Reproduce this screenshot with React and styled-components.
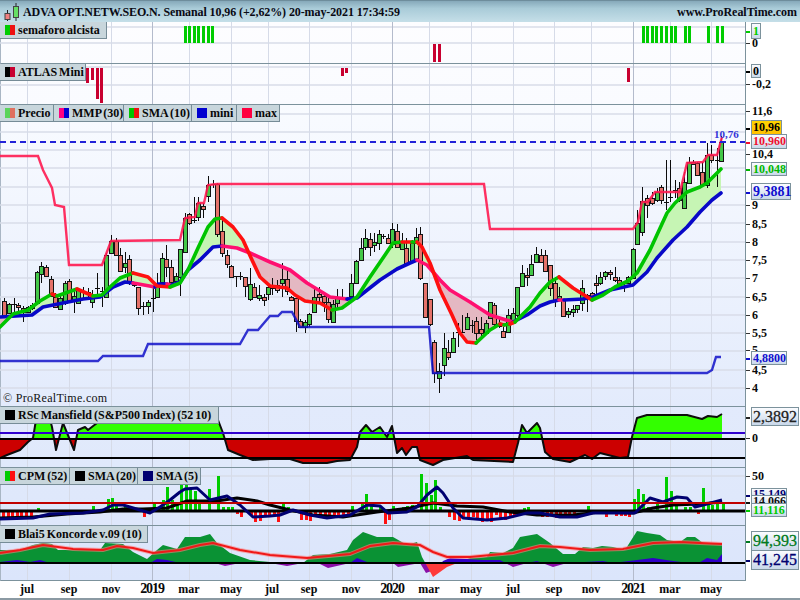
import React from 'react';
import styled, { createGlobalStyle } from 'styled-components';

const GlobalStyle = createGlobalStyle`
  html, body {
    margin: 0;
    padding: 0;
    background: #fff;
  }
  * {
    box-sizing: border-box;
  }
`;

const SERIF = '"Liberation Serif", "Times New Roman", serif';
const PLOT_W = 745;

/* vertical grid: months and years, the year lines are darker */
const monthX = [27, 69, 111, 189, 231, 268, 309, 351, 429, 471, 513, 554, 591, 670, 711];
const yearX = [152, 392, 633];

const timeLabels = [
  ['jul', 27], ['sep', 69], ['nov', 111], ['2019', 152, true], ['mar', 189], ['may', 231],
  ['jul', 272], ['sep', 309], ['nov', 351], ['2020', 392, true], ['mar', 429], ['may', 471],
  ['jul', 513], ['sep', 554], ['nov', 591], ['2021', 633, true], ['mar', 670], ['may', 711],
];

/* x, body top, body bottom, high, low, kind (g up, r down, d doji) */
const candles = [
  [4, 301, 315, 298, 317, 'r'], [9, 304, 313, 303, 314, 'g'], [14, 304, 304, 298, 314, 'd'], [18, 305, 307, 303, 313, 'r'],
  [23, 308, 312, 306, 322, 'r'], [28, 307, 312, 306, 313, 'g'], [32, 305, 308, 303, 310, 'g'], [37, 272, 303, 271, 305, 'g'],
  [41, 266, 274, 262, 283, 'g'], [46, 267, 276, 265, 277, 'r'], [51, 279, 296, 276, 297, 'r'], [55, 297, 307, 293, 308, 'r'],
  [60, 298, 309, 296, 310, 'g'], [65, 283, 303, 281, 305, 'g'], [69, 281, 302, 279, 302, 'r'], [74, 296, 300, 289, 313, 'g'],
  [78, 289, 303, 288, 304, 'g'], [83, 291, 291, 287, 298, 'd'], [88, 292, 292, 288, 297, 'd'], [92, 298, 302, 290, 308, 'g'],
  [97, 288, 288, 273, 298, 'd'], [102, 291, 291, 287, 307, 'd'], [106, 255, 297, 253, 298, 'g'], [111, 241, 253, 235, 254, 'g'],
  [116, 241, 255, 238, 256, 'r'], [120, 255, 271, 248, 272, 'r'], [125, 263, 267, 252, 273, 'g'], [129, 259, 282, 255, 285, 'r'],
  [134, 285, 285, 284, 287, 'd'], [138, 287, 308, 287, 315, 'r'], [143, 306, 306, 302, 315, 'd'], [148, 302, 306, 300, 314, 'g'],
  [153, 298, 298, 285, 312, 'd'], [157, 285, 297, 273, 298, 'g'], [162, 258, 282, 253, 282, 'g'], [166, 259, 267, 245, 277, 'r'],
  [171, 267, 282, 260, 285, 'r'], [176, 276, 281, 273, 282, 'g'], [180, 249, 277, 249, 296, 'g'], [185, 218, 252, 213, 253, 'g'],
  [189, 214, 223, 213, 225, 'r'], [194, 220, 220, 197, 223, 'd'], [198, 203, 217, 197, 221, 'g'], [203, 206, 209, 203, 218, 'r'],
  [208, 185, 196, 176, 202, 'g'], [213, 184, 184, 180, 188, 'd'], [217, 184, 234, 183, 237, 'r'], [222, 231, 253, 218, 257, 'r'],
  [227, 255, 264, 250, 268, 'r'], [231, 266, 277, 265, 278, 'r'], [236, 276, 276, 276, 287, 'd'], [240, 276, 276, 272, 280, 'd'],
  [245, 277, 286, 277, 297, 'r'], [250, 284, 299, 268, 301, 'g'], [254, 287, 297, 283, 298, 'r'], [259, 295, 298, 285, 301, 'g'],
  [264, 297, 300, 294, 306, 'r'], [268, 287, 294, 285, 300, 'g'], [272, 288, 288, 278, 295, 'd'], [277, 285, 290, 280, 293, 'r'],
  [282, 279, 283, 263, 297, 'g'], [287, 279, 291, 268, 295, 'r'], [291, 297, 300, 296, 301, 'r'], [296, 298, 321, 298, 332, 'r'],
  [300, 321, 327, 319, 328, 'r'], [305, 322, 327, 320, 333, 'g'], [309, 314, 324, 313, 327, 'g'], [314, 297, 312, 287, 313, 'g'],
  [319, 294, 297, 287, 303, 'r'], [324, 296, 302, 293, 312, 'r'], [328, 302, 319, 298, 323, 'r'], [333, 304, 322, 300, 323, 'g'],
  [337, 298, 303, 289, 308, 'g'], [342, 297, 297, 289, 300, 'd'], [347, 298, 298, 297, 301, 'd'], [351, 283, 296, 274, 297, 'g'],
  [356, 261, 283, 260, 283, 'g'], [361, 248, 260, 238, 261, 'g'], [365, 238, 247, 229, 250, 'g'], [370, 239, 247, 233, 256, 'r'],
  [374, 242, 245, 233, 252, 'g'], [379, 234, 243, 230, 250, 'g'], [383, 236, 236, 234, 239, 'd'], [388, 238, 243, 234, 243, 'r'],
  [392, 229, 244, 223, 248, 'g'], [397, 231, 247, 224, 248, 'r'], [402, 242, 249, 233, 250, 'g'], [406, 248, 263, 238, 263, 'r'],
  [412, 243, 262, 240, 263, 'g'], [416, 237, 243, 228, 244, 'g'], [420, 234, 278, 227, 280, 'r'], [425, 283, 317, 283, 317, 'r'],
  [430, 299, 324, 299, 326, 'r'], [434, 342, 373, 340, 383, 'r'], [439, 371, 378, 363, 393, 'g'], [444, 348, 365, 333, 376, 'g'],
  [448, 352, 357, 340, 360, 'r'], [453, 338, 352, 332, 353, 'g'], [458, 332, 332, 323, 347, 'd'], [462, 332, 332, 315, 333, 'd'],
  [467, 317, 329, 313, 330, 'g'], [472, 325, 325, 320, 333, 'd'], [476, 321, 333, 317, 340, 'r'], [481, 329, 333, 317, 337, 'r'],
  [486, 323, 333, 320, 333, 'g'], [490, 302, 318, 302, 319, 'g'], [494, 305, 324, 303, 328, 'r'], [499, 326, 326, 317, 328, 'd'],
  [503, 331, 337, 327, 338, 'r'], [508, 315, 332, 309, 333, 'g'], [513, 313, 320, 308, 324, 'g'], [517, 287, 315, 287, 317, 'g'],
  [522, 273, 286, 265, 287, 'g'], [527, 275, 277, 268, 286, 'r'], [531, 264, 275, 255, 276, 'g'], [536, 254, 262, 247, 263, 'g'],
  [541, 255, 262, 249, 263, 'r'], [545, 255, 271, 250, 272, 'r'], [550, 265, 288, 265, 296, 'r'], [555, 283, 300, 277, 307, 'r'],
  [559, 296, 300, 287, 300, 'g'], [563, 300, 316, 299, 317, 'r'], [568, 311, 314, 308, 318, 'g'], [573, 309, 312, 305, 317, 'g'],
  [577, 305, 309, 305, 313, 'g'], [582, 288, 303, 280, 311, 'g'], [587, 295, 297, 294, 312, 'r'], [592, 293, 296, 292, 300, 'r'],
  [596, 283, 285, 275, 294, 'r'], [600, 277, 283, 272, 285, 'g'], [605, 272, 276, 271, 280, 'g'], [610, 272, 274, 270, 280, 'r'],
  [615, 277, 280, 267, 282, 'r'], [619, 280, 285, 277, 287, 'r'], [624, 286, 286, 282, 292, 'd'], [628, 277, 283, 276, 284, 'g'],
  [633, 249, 278, 248, 279, 'g'], [637, 223, 244, 210, 245, 'g'], [642, 201, 232, 187, 236, 'g'], [647, 198, 205, 195, 218, 'r'],
  [652, 198, 203, 192, 205, 'r'], [657, 192, 200, 188, 202, 'g'], [661, 187, 200, 185, 204, 'r'], [666, 202, 202, 160, 210, 'd'],
  [670, 197, 197, 160, 202, 'd'], [675, 190, 190, 180, 198, 'd'], [679, 188, 200, 182, 202, 'r'], [684, 182, 208, 172, 209, 'g'],
  [689, 162, 183, 157, 184, 'g'], [693, 162, 164, 160, 165, 'r'], [697, 163, 175, 162, 176, 'r'], [702, 172, 185, 162, 187, 'r'],
  [707, 155, 185, 143, 188, 'g'], [711, 155, 160, 145, 163, 'r'], [717, 160, 160, 148, 187, 'd'], [721, 142, 161, 136, 162, 'g'],
];

const maxLine = [[0, 156], [38, 156], [43, 170], [52, 188], [55, 205], [64, 207], [69, 265], [102, 265], [111, 241], [180, 240], [185, 218], [195, 217], [198, 203], [204, 203], [208, 185], [217, 184], [484, 184], [490, 229], [633, 229], [638, 222], [642, 202], [648, 202], [655, 192], [680, 192], [687, 163], [703, 162], [708, 155], [717, 155], [722, 137]];
const miniLine = [[0, 361], [98, 361], [103, 356], [143, 356], [148, 344], [240, 344], [248, 330], [258, 330], [270, 316], [278, 316], [282, 312], [292, 312], [300, 327], [429, 327], [433, 373], [707, 373], [712, 370], [716, 357], [721, 357]];

/* MMP and SMA are cut in runs: first colour when rising, second when falling */
const mmpRuns = [
  ['b', [[0, 317], [32, 315], [43, 307], [63, 303], [83, 299], [100, 297], [113, 287], [125, 282], [133, 283]]],
  ['p', [[133, 283], [155, 287]]],
  ['b', [[155, 287], [158, 284], [167, 284]]],
  ['p', [[167, 284], [172, 285]]],
  ['b', [[172, 285], [180, 282], [188, 270], [200, 260], [213, 247], [222, 246]]],
  ['p', [[222, 246], [237, 248], [250, 253], [270, 262], [290, 270], [307, 283], [330, 297], [347, 299]]],
  ['b', [[347, 299], [357, 298], [380, 280], [397, 269], [410, 263], [417, 260]]],
  ['p', [[417, 260], [427, 265], [440, 280], [450, 290], [470, 302], [490, 315], [503, 319], [513, 322]]],
  ['b', [[513, 322], [527, 315], [540, 306], [550, 302], [559, 300]]],
  ['p', [[559, 300], [564, 300]]],
  ['b', [[564, 300], [583, 299], [593, 297], [610, 290], [633, 285], [647, 272], [657, 258], [673, 240], [687, 227], [700, 212], [712, 200], [721, 193]]],
];

const smaRuns = [
  ['g', [[0, 327], [13, 314], [28, 310], [40, 301], [52, 294]]],
  ['r', [[52, 294], [57, 296]]],
  ['g', [[57, 296], [77, 289]]],
  ['r', [[77, 289], [93, 296]]],
  ['g', [[93, 296], [102, 295], [110, 287], [120, 278], [133, 273]]],
  ['r', [[133, 273], [148, 277], [157, 286], [170, 287]]],
  ['g', [[170, 287], [180, 283], [188, 270], [198, 248], [208, 227], [215, 219], [222, 218]]],
  ['r', [[222, 218], [233, 227], [243, 240], [252, 260], [260, 277], [270, 286], [287, 288], [295, 295], [305, 301], [320, 303], [332, 310]]],
  ['g', [[332, 310], [342, 308], [357, 297], [370, 277], [385, 255], [393, 243], [402, 242]]],
  ['r', [[402, 242], [412, 242]]],
  ['g', [[412, 242], [417, 242]]],
  ['r', [[417, 242], [422, 247], [430, 263], [440, 290], [452, 315], [460, 333], [467, 342], [476, 343]]],
  ['g', [[476, 343], [490, 330], [500, 324]]],
  ['r', [[500, 324], [504, 325]]],
  ['g', [[504, 325], [510, 324]]],
  ['r', [[510, 324], [515, 322]]],
  ['g', [[515, 322], [530, 307], [540, 293], [550, 282], [559, 277]]],
  ['r', [[559, 277], [573, 288], [592, 300]]],
  ['g', [[592, 300], [603, 295], [615, 287], [628, 281], [637, 273], [650, 250], [667, 213], [675, 203], [687, 192], [700, 187], [707, 183], [721, 169]]],
];

const mansfield = [[0, 458], [7, 455], [20, 450], [28, 442], [33, 438], [36, 420], [40, 404], [46, 404], [52, 427], [56, 450], [63, 423], [74, 450], [78, 430], [85, 427], [88, 430], [97, 423], [104, 412], [216, 412], [218, 420], [223, 433], [228, 450], [240, 455], [253, 460], [270, 459], [290, 459], [303, 463], [327, 463], [337, 461], [350, 460], [357, 447], [360, 432], [366, 425], [372, 432], [380, 427], [387, 437], [392, 426], [397, 453], [402, 448], [406, 455], [412, 447], [417, 447], [420, 460], [433, 465], [443, 460], [467, 456], [473, 460], [513, 462], [518, 443], [522, 425], [527, 433], [537, 423], [540, 428], [545, 452], [553, 459], [570, 462], [585, 455], [592, 459], [600, 453], [620, 458], [628, 457], [632, 437], [637, 418], [647, 415], [687, 415], [702, 419], [708, 416], [717, 417], [722, 414]];

/* x, end of the bar; above the zero line is green, below is red */
const cpmBars = [
  [2, 517], [7, 517], [11, 517], [16, 517], [20, 517], [25, 517], [30, 517], [37, 508], [92, 506], [107, 499], [111, 498], [115, 503], [124, 507],
  [143, 517], [148, 514], [153, 503], [157, 507], [162, 500], [166, 487], [171, 500], [176, 503], [180, 485], [185, 485], [189, 490], [194, 491], [198, 503], [208, 489], [217, 476], [222, 507], [227, 507], [231, 507],
  [236, 514], [240, 517], [250, 516], [254, 522], [259, 521], [264, 516], [268, 516], [273, 516], [277, 522], [282, 504], [287, 507],
  [300, 520], [305, 520], [309, 521], [314, 515], [319, 515], [324, 515], [328, 515], [333, 515], [337, 515], [342, 515], [347, 515], [351, 506],
  [361, 504], [365, 494], [370, 504], [379, 507], [384, 524], [388, 520], [392, 506], [402, 507], [406, 506], [411, 505], [420, 474], [425, 483], [430, 495], [434, 480], [439, 507],
  [448, 517], [453, 520], [458, 521], [462, 518], [467, 517], [472, 517], [476, 518], [481, 522], [486, 520], [490, 522], [495, 515], [499, 518], [504, 520], [509, 517], [513, 517],
  [523, 508], [527, 507], [532, 515], [541, 517], [546, 517], [550, 516], [555, 518], [559, 518], [564, 518], [568, 517], [573, 516], [587, 506], [605, 517], [615, 516], [620, 516], [624, 516], [628, 517],
  [633, 499], [637, 489], [642, 494], [647, 507], [656, 503], [665, 477], [670, 491], [675, 504], [684, 507], [689, 507], [697, 514], [702, 488], [707, 504], [711, 505], [716, 502], [722, 503],
];
const cpmSma20 = [[0, 518], [33, 517], [67, 514], [100, 512], [123, 509], [143, 509], [167, 508], [187, 501], [217, 501], [237, 498], [257, 501], [270, 505], [290, 510], [313, 515], [343, 517], [377, 512], [410, 508], [433, 503], [457, 506], [483, 507], [510, 512], [537, 515], [573, 515], [600, 512], [633, 513], [653, 508], [673, 505], [700, 504], [722, 502]];
const cpmSma5 = [[0, 519], [33, 518], [50, 514], [83, 513], [103, 510], [113, 505], [123, 505], [140, 510], [150, 513], [160, 507], [170, 500], [180, 492], [185, 489], [197, 488], [210, 500], [227, 496], [240, 505], [253, 517], [270, 516], [280, 515], [293, 510], [310, 515], [327, 518], [350, 515], [367, 505], [380, 506], [388, 513], [407, 512], [417, 507], [427, 495], [437, 487], [443, 493], [453, 508], [463, 518], [487, 520], [507, 518], [527, 513], [540, 513], [560, 517], [577, 517], [593, 513], [620, 513], [635, 513], [650, 498], [663, 502], [677, 497], [687, 498], [695, 507], [707, 504], [722, 500]];

const koncordeGreen = [[0, 550], [20, 550], [33, 545], [43, 543], [52, 544], [58, 550], [100, 550], [105, 543], [123, 544], [133, 552], [147, 559], [157, 550], [163, 545], [177, 549], [185, 537], [200, 537], [210, 534], [217, 543], [230, 553], [250, 560], [270, 562], [303, 563], [313, 555], [330, 554], [347, 550], [353, 540], [363, 532], [377, 537], [393, 537], [407, 545], [417, 542], [422, 557], [433, 577], [447, 567], [470, 558], [487, 557], [490, 552], [503, 553], [513, 548], [520, 537], [537, 534], [550, 543], [563, 554], [575, 554], [583, 547], [593, 548], [602, 546], [613, 547], [625, 550], [637, 531], [647, 533], [660, 535], [667, 540], [680, 542], [687, 537], [695, 537], [703, 543], [722, 543]];
const koncordeBlue = [[0, 562], [17, 560], [30, 562], [40, 560], [50, 563], [150, 563], [157, 559], [167, 560], [180, 563], [215, 563], [225, 566], [240, 563], [270, 563], [287, 566], [303, 563], [320, 564], [328, 568], [350, 563], [357, 558], [367, 562], [393, 563], [398, 567], [420, 563], [426, 573], [437, 569], [443, 561], [450, 558], [483, 560], [500, 560], [513, 567], [527, 563], [537, 561], [553, 567], [567, 563], [603, 561], [613, 563], [653, 558], [673, 561], [697, 564], [707, 558], [717, 560], [722, 554]];
const koncordeRed = [[0, 553], [20, 550], [43, 545], [73, 549], [103, 550], [117, 546], [133, 548], [153, 553], [180, 550], [200, 545], [213, 543], [240, 550], [270, 555], [307, 558], [350, 554], [370, 546], [393, 543], [420, 545], [433, 552], [447, 557], [470, 557], [513, 553], [540, 546], [560, 547], [590, 550], [623, 549], [653, 543], [680, 542], [700, 543], [722, 544]];

const RUN_COLOR = { g: '#00c400', r: '#ff1010', b: '#0808c8', p: '#ff1070' };

const toPoints = (pts) => pts.map((p) => p.join(',')).join(' ');

const yAt = (pts, x) => {
  for (let i = 1; i < pts.length; i++) {
    if (x <= pts[i][0]) {
      const [x0, y0] = pts[i - 1];
      const [x1, y1] = pts[i];
      return x1 === x0 ? y1 : y0 + ((y1 - y0) * (x - x0)) / (x1 - x0);
    }
  }
  return pts[pts.length - 1][1];
};

/* the band between SMA and MMP: green while the SMA is above, pink while it is under */
function bandShapes() {
  const sma = smaRuns.flatMap((r) => r[1]);
  const mmp = mmpRuns.flatMap((r) => r[1]);
  const shapes = [];
  let run = null;
  for (let x = 0; x <= 721; x++) {
    const a = yAt(sma, x);
    const b = yAt(mmp, x);
    const up = a < b;
    if (!run || run.up !== up) {
      if (run) shapes.push(run);
      run = { up, top: [], bottom: [] };
    }
    run.top.push([x, a]);
    run.bottom.unshift([x, b]);
  }
  shapes.push(run);
  return shapes;
}

function Grid({ top, height, lines = [] }) {
  return (
    <g>
      {lines.map((y) => <line key={y} x1="0" x2={PLOT_W} y1={y} y2={y} stroke="#d9dde9" strokeWidth="1.5" />)}
      {monthX.map((x) => <line key={x} x1={x + 0.5} x2={x + 0.5} y1={top} y2={top + height} stroke="#d6dbe8" strokeWidth="1" />)}
      {yearX.map((x) => <line key={x} x1={x + 0.5} x2={x + 0.5} y1={top} y2={top + height} stroke="#b4bbcc" strokeWidth="1" />)}
    </g>
  );
}

function Chart({ top, height, lines, children }) {
  return (
    <ChartSvg width={PLOT_W} height={height} viewBox={`0 ${top} ${PLOT_W} ${height}`}>
      <Grid top={top} height={height} lines={lines} />
      {children}
    </ChartSvg>
  );
}

function Candle({ c }) {
  const [x, t, b, hi, lo, kind] = c;
  const fill = kind === 'g' ? '#44c848' : '#e5726a';
  return (
    <g shapeRendering="crispEdges">
      <line x1={x + 0.5} x2={x + 0.5} y1={hi} y2={lo} stroke="#0c0c0c" />
      {kind === 'd'
        ? <line x1={x - 2} x2={x + 3} y1={t + 0.5} y2={t + 0.5} stroke="#0c0c0c" />
        : <rect x={x - 1.5} y={t + 0.5} width="4" height={b - t} fill={fill} stroke="#141414" />}
    </g>
  );
}

function ColorRuns({ runs }) {
  return runs.map(([c, pts], i) => (
    <polyline key={i} points={toPoints(pts)} fill="none" stroke={RUN_COLOR[c]} strokeWidth="3.6" strokeLinejoin="round" strokeLinecap="round" />
  ));
}

function Semaforo() {
  const green = [184, 188, 193, 197, 202, 207, 211, 642, 646, 651, 655, 660, 665, 670, 674, 684, 688, 707, 716, 721];
  return (
    <Chart top={22} height={41} lines={[27, 43]}>
      <g shapeRendering="crispEdges">
        {green.map((x) => <rect key={x} x={x} y="26" width="3" height="17" fill="#00cc00" />)}
        {[433, 438].map((x) => <rect key={x} x={x} y="44" width="3" height="18" fill="#c80030" />)}
      </g>
    </Chart>
  );
}

function Atlas() {
  const bars = [[86, 83], [91, 80], [96, 99], [100, 103], [341, 76], [345, 73], [627, 82]];
  return (
    <Chart top={64} height={40} lines={[67, 85]}>
      <g shapeRendering="crispEdges">
        {bars.map(([x, y]) => <rect key={x} x={x} y="68" width="3" height={y - 68} fill="#c80030" />)}
      </g>
    </Chart>
  );
}

function Price() {
  const lines = [];
  for (let p = 4; p <= 11.5; p += 0.5) lines.push(Math.round(388 - 36.6 * (p - 4)));
  return (
    <Chart top={105} height={301} lines={lines}>
      {bandShapes().map((s, i) => (
        <polygon key={i} points={toPoints([...s.top, ...s.bottom])} fill={s.up ? '#c6f5b4' : '#e4b8c2'} />
      ))}
      {candles.map((c) => <Candle key={c[0]} c={c} />)}
      <polyline points={toPoints(miniLine)} fill="none" stroke="#1010c8" strokeWidth="2.4" strokeOpacity=".85" />
      <polyline points={toPoints(maxLine)} fill="none" stroke="#ff1a50" strokeWidth="2.4" strokeOpacity=".9" />
      <line x1="0" x2={PLOT_W} y1="142" y2="142" stroke="#2222d8" strokeWidth="2" strokeDasharray="6 4" />
      <ColorRuns runs={mmpRuns} />
      <ColorRuns runs={smaRuns} />
      <text x="714" y="138" fontFamily={SERIF} fontSize="11" fontWeight="bold" fill="#3434d8">10,76</text>
    </Chart>
  );
}

function Mansfield() {
  const zero = 439;
  const area = toPoints([[0, zero], ...mansfield, [722, zero]]);
  return (
    <Chart top={407} height={60}>
      <defs>
        <clipPath id="rs-up"><rect x="0" y="400" width={PLOT_W} height={zero - 400} /></clipPath>
        <clipPath id="rs-down"><rect x="0" y={zero} width={PLOT_W} height="40" /></clipPath>
      </defs>
      <polygon points={area} fill="#33ff00" clipPath="url(#rs-up)" />
      <polygon points={area} fill="#cc0000" clipPath="url(#rs-down)" />
      <polyline points={toPoints(mansfield)} fill="none" stroke="#0c0c0c" strokeWidth="2" strokeLinejoin="round" />
      <line x1="0" x2={PLOT_W} y1="433" y2="433" stroke="#3000d0" strokeWidth="2" />
      <line x1="0" x2={PLOT_W} y1={zero} y2={zero} stroke="#000" strokeWidth="2" />
      <line x1="0" x2={PLOT_W} y1="458" y2="458" stroke="#000" strokeWidth="2" />
    </Chart>
  );
}

function Cpm() {
  const zero = 511;
  return (
    <Chart top={468} height={57} lines={[476]}>
      <g shapeRendering="crispEdges">
        {cpmBars.map(([x, y]) => (
          <rect key={x} x={x} y={Math.min(y, zero)} width="3" height={Math.abs(y - zero)} fill={y < zero ? '#00cc00' : '#ff1010'} />
        ))}
      </g>
      <line x1="0" x2={PLOT_W} y1={zero} y2={zero} stroke="#000" strokeWidth="3" />
      <polyline points={toPoints(cpmSma20)} fill="none" stroke="#000" strokeWidth="3" strokeLinejoin="round" />
      <polyline points={toPoints(cpmSma5)} fill="none" stroke="#000070" strokeWidth="3" strokeLinejoin="round" />
      <line x1="0" x2={PLOT_W} y1="503" y2="503" stroke="#c00000" strokeWidth="2" />
    </Chart>
  );
}

function Koncorde() {
  const zero = 563;
  const green = toPoints([[0, zero], ...koncordeGreen, [722, zero]]);
  const blue = toPoints([[0, zero], ...koncordeBlue, [722, zero]]);
  return (
    <Chart top={526} height={54}>
      <defs>
        <clipPath id="k-up"><rect x="0" y="520" width={PLOT_W} height={zero - 520} /></clipPath>
        <clipPath id="k-down"><rect x="0" y={zero} width={PLOT_W} height="30" /></clipPath>
      </defs>
      <polygon points={green} fill="#0a9234" clipPath="url(#k-up)" />
      <polygon points={blue} fill="#8a10a8" clipPath="url(#k-down)" />
      <polygon points={green} fill="#ff3a3a" clipPath="url(#k-down)" />
      <polygon points={blue} fill="#3000c8" clipPath="url(#k-up)" />
      <polyline points={toPoints(koncordeRed)} fill="none" stroke="#ff8080" strokeWidth="4" strokeOpacity=".6" />
      <polyline points={toPoints(koncordeRed)} fill="none" stroke="#f01818" strokeWidth="2" />
      <line x1="0" x2={PLOT_W} y1={zero} y2={zero} stroke="#000" strokeWidth="2" />
    </Chart>
  );
}

function AppIcon() {
  return (
    <svg width="20" height="20" viewBox="0 0 20 20">
      <path d="M5.5 8v11M14 1v18" stroke="#222" strokeWidth="1" />
      <rect x="3" y="11.5" width="5" height="6" fill="#f08080" stroke="#444" />
      <rect x="11.5" y="4.5" width="5" height="11" fill="#66e066" stroke="#444" />
    </svg>
  );
}

function Axis({ top, ticks = [], boxes = [] }) {
  return (
    <AxisColumn>
      {ticks.map(([label, y]) => (
        <AxisTick key={y} style={{ top: y - top - 8 }}>{label}</AxisTick>
      ))}
      {boxes.map((b) => (
        <ValueBox key={b.label} $color={b.color} $bg={b.bg} $size={b.size} style={{ top: b.y - top, height: b.h, width: b.w }}>
          {b.label}
        </ValueBox>
      ))}
    </AxisColumn>
  );
}

function LegendItem({ a, b, width, children }) {
  return (
    <Legend $width={width}>
      <Swatch $a={a} $b={b || a} />
      {children}
    </Legend>
  );
}

function App() {
  return (
    <Frame>
      <GlobalStyle />
      <TitleBar>
        <AppIcon />
        <Title>ADVA OPT.NETW.SEO.N. Semanal 10,96 (+2,62%) 20-may-2021 17:34:59</Title>
        <Site>www.ProRealTime.com</Site>
      </TitleBar>

      <Pane $height={42}>
        <Plot $from="#fdfdff" $to="#fbfcff">
          <Semaforo />
          <LegendRow><LegendItem width={107} a="#00cc00" b="#ee1010">semaforo alcista</LegendItem></LegendRow>
        </Plot>
        <Axis top={22} ticks={[['0', 43]]} boxes={[{ label: '1', y: 23, h: 16, color: '#00cc00' }]} />
      </Pane>

      <Pane $height={41}>
        <Plot $from="#fbfcff" $to="#fafbff">
          <Atlas />
          <LegendRow><LegendItem width={86} a="#000" b="#c80030">ATLAS Mini</LegendItem></LegendRow>
        </Plot>
        <Axis top={64} ticks={[['-0,2', 84]]} boxes={[{ label: '0', y: 64, h: 14, color: '#000' }]} />
      </Pane>

      <Pane $height={302}>
        <Plot $from="#f9fbff" $to="#e3ebfc">
          <Price />
          <LegendRow>
            <LegendItem width={54} a="#5bd45b" b="#e0705f">Precio</LegendItem>
            <LegendItem width={70} a="#ff0080" b="#0000d0">MMP (30)</LegendItem>
            <LegendItem width={68} a="#00c400" b="#ee1010">SMA (10)</LegendItem>
            <LegendItem width={45} a="#0000d0">mini</LegendItem>
            <LegendItem width={43} a="#ff0040">max</LegendItem>
          </LegendRow>
          <Copyright>© ProRealTime.com</Copyright>
        </Plot>
        <Axis
          top={105}
          ticks={[['11,6', 111], ['10,4', 154], ['9', 205], ['8,5', 224], ['8', 242], ['7,5', 260], ['7', 278], ['6,5', 297], ['6', 315], ['5,5', 333], ['5', 350], ['4,5', 370], ['4', 388]]}
          boxes={[
            { label: '10,96', y: 120, h: 15, w: 31, color: '#000', bg: 'linear-gradient(#ffd400, #ffc000)' },
            { label: '10,960', y: 134, h: 15, w: 36, color: '#f01030' },
            { label: '10,048', y: 162, h: 14, w: 36, color: '#00b800' },
            { label: '9,3881', y: 183, h: 17, w: 40, color: '#1010d0', size: 14 },
            { label: '4,8800', y: 351, h: 14, w: 36, color: '#1010d0' },
          ]}
        />
      </Pane>

      <Pane $height={61}>
        <Plot $from="#e2eafc" $to="#e0e9fb">
          <Mansfield />
          <LegendRow><LegendItem width={219} a="#000">RSc Mansfield (S&amp;P500 Index) (52 10)</LegendItem></LegendRow>
        </Plot>
        <Axis top={407} ticks={[['0', 438]]} boxes={[{ label: '2,3892', y: 407, h: 19, w: 48, color: '#222', size: 16 }]} />
      </Pane>

      <Pane $height={58}>
        <Plot $from="#e0e9fb" $to="#dee7fb">
          <Cpm />
          <LegendRow>
            <LegendItem width={70} a="#00cc00" b="#ff1010">CPM (52)</LegendItem>
            <LegendItem width={68} a="#000">SMA (20)</LegendItem>
            <LegendItem width={63} a="#000070">SMA (5)</LegendItem>
          </LegendRow>
        </Plot>
        <Axis
          top={468}
          ticks={[['50', 476]]}
          boxes={[
            { label: '15,149', y: 488, h: 13, w: 36, color: '#000070' },
            { label: '14,066', y: 495, h: 13, w: 36, color: '#111' },
            { label: '11,116', y: 503, h: 14, w: 36, color: '#00cc00' },
          ]}
        />
      </Pane>

      <Pane $height={55}>
        <Plot $from="#dee7fb" $to="#dbe5fb">
          <Koncorde />
          <LegendRow><LegendItem width={148} a="#000">Blai5 Koncorde v.09 (10)</LegendItem></LegendRow>
        </Plot>
        <Axis
          top={526}
          boxes={[
            { label: '94,393', y: 531, h: 20, w: 48, color: '#007a20', size: 16 },
            { label: '41,245', y: 550, h: 20, w: 48, color: '#000070', size: 16 },
          ]}
        />
      </Pane>

      <TimeAxis>
        {timeLabels.map(([label, x, year]) => (
          <TimeLabel key={`${label}${x}`} $year={year} style={{ left: x }}>{label}</TimeLabel>
        ))}
      </TimeAxis>
    </Frame>
  );
}

const Frame = styled.div`
  width: 800px;
  height: 600px;
  display: flex;
  flex-direction: column;
  overflow: hidden;
  background: #fff;
  font-family: ${SERIF};
  border-bottom: 2px solid #8b9aa3;
`;
const TitleBar = styled.div`
  height: 22px;
  flex: none;
  display: flex;
  align-items: center;
  gap: 1px;
  padding: 1px 3px 0 2px;
  background: linear-gradient(#86a9ba, #a9cbd8 35%, #c5dfe8);
  border-top: 1px solid #6e8d9c;
`;
const Title = styled.span`
  font-weight: bold;
  font-size: 12px;
  letter-spacing: -0.1px;
  color: #0a0a14;
  white-space: nowrap;
`;
const Site = styled.span`
  margin-left: auto;
  font-weight: bold;
  font-size: 12px;
  letter-spacing: -0.05px;
  color: #0a0a14;
`;
const Pane = styled.div`
  height: ${(p) => p.$height}px;
  flex: none;
  display: flex;
`;
const Plot = styled.div`
  position: relative;
  width: 746px;
  flex: none;
  background: linear-gradient(${(p) => p.$from}, ${(p) => p.$to});
  border-right: 1px solid #7c929c;
  border-bottom: 1px solid #7c929c;
  border-left: 1px solid #a9b6c4;
`;
const ChartSvg = styled.svg`
  display: block;
  margin-left: -1px;
`;
const LegendRow = styled.div`
  position: absolute;
  top: 0;
  left: -1px;
  display: flex;
`;
const Legend = styled.div`
  width: ${(p) => p.$width}px;
  height: 17px;
  display: flex;
  align-items: center;
  gap: 3px;
  padding-left: 5px;
  background: #c8d6dc;
  border-right: 1px solid #768c97;
  border-bottom: 1px solid #768c97;
  font-weight: bold;
  font-size: 12px;
  word-spacing: -1px;
  color: #080808;
  white-space: nowrap;
`;
const Swatch = styled.span`
  width: 10px;
  height: 10px;
  flex: none;
  background: linear-gradient(90deg, ${(p) => p.$a} 50%, ${(p) => p.$b} 50%);
`;
const Copyright = styled.div`
  position: absolute;
  left: 2px;
  bottom: 0;
  font-size: 12px;
  letter-spacing: 0.3px;
  color: #111;
`;
const AxisColumn = styled.div`
  position: relative;
  flex: 1;
  background: #fff;
`;
const AxisTick = styled.div`
  position: absolute;
  left: 6px;
  font-weight: bold;
  font-size: 12px;
  line-height: 16px;
  color: #0a0a0a;

  &::before {
    content: '';
    position: absolute;
    left: -6px;
    top: 8px;
    width: 4px;
    height: 1px;
    background: #333;
  }
`;
const ValueBox = styled.div`
  position: absolute;
  left: 5px;
  display: flex;
  align-items: center;
  padding: 0 1px 0 1px;
  background: ${(p) => p.$bg || 'linear-gradient(#fbfcff, #c9d8ea)'};
  border: 1px solid #7c929c;
  color: ${(p) => p.$color};
  font-weight: ${(p) => (p.$size >= 16 ? 'normal' : 'bold')};
  -webkit-text-stroke: ${(p) => (p.$size >= 16 ? '0.3px' : '0')};
  font-size: ${(p) => p.$size || 12}px;

  &::before {
    content: '';
    position: absolute;
    left: -6px;
    top: 50%;
    width: 4px;
    height: 2px;
    background: ${(p) => p.$color};
  }
`;
const TimeAxis = styled.div`
  position: relative;
  flex: 1;
  background: #fff;
`;
const TimeLabel = styled.span`
  position: absolute;
  top: ${(p) => (p.$year ? 0 : 1)}px;
  transform: translateX(-50%);
  font-weight: bold;
  font-size: ${(p) => (p.$year ? 14 : 12)}px;
  letter-spacing: ${(p) => (p.$year ? -1.1 : 0)}px;
  color: #0a0a0a;
`;

export default App;
